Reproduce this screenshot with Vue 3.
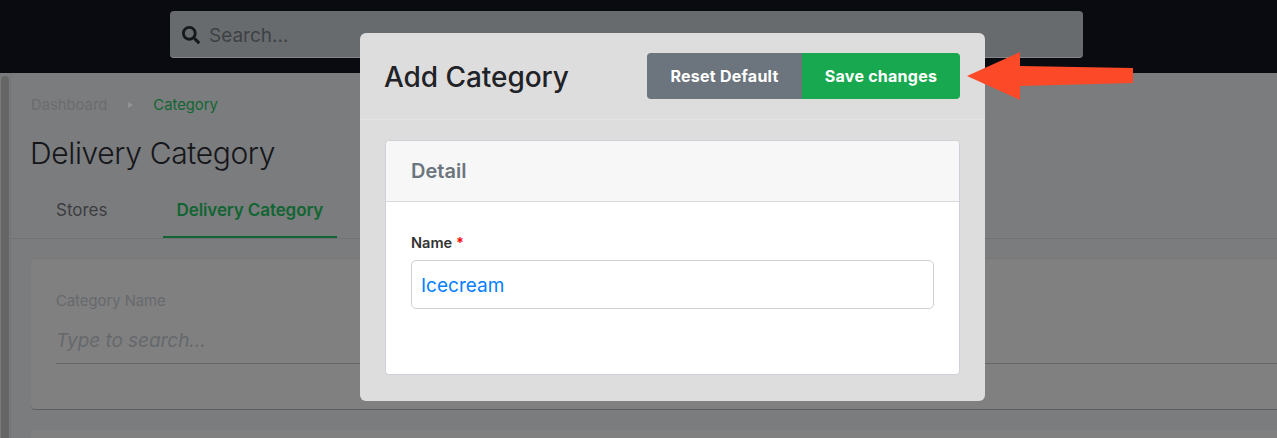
<script setup>
import { ref } from 'vue';

const tabs = [
  { label: 'Stores', active: false },
  { label: 'Delivery Category', active: true },
];
const categoryName = ref('Icecream');
</script>

<template>
  <div class="page">
    <header class="navbar">
      <div class="search">
        <svg class="search-icon" viewBox="0 0 512 512" aria-hidden="true">
          <path d="M505 442.700L405.300 343c-4.500-4.500-10.600-7-17-7H372c27.600-35.300 44-79.700 44-128C416 93.100 322.900 0 208 0S0 93.100 0 208s93.100 208 208 208c48.300 0 92.700-16.400 128-44v16.300c0 6.400 2.500 12.500 7 17l99.700 99.700c9.400 9.400 24.600 9.400 33.900 0l28.300-28.300c9.400-9.400 9.400-24.600.1-34zM208 336c-70.700 0-128-57.200-128-128 0-70.700 57.200-128 128-128 70.700 0 128 57.200 128 128 0 70.700-57.200 128-128 128z" />
        </svg>
        <span class="search-text">Search...</span>
      </div>
    </header>

    <div class="body">
      <div class="rail"><div class="rail-thumb"></div></div>
      <main class="content">
        <div class="top">
          <nav class="crumbs">
            <span class="crumb">Dashboard</span>
            <span class="crumb-sep"></span>
            <span class="crumb-current">Category</span>
          </nav>
          <h1 class="page-title">Delivery Category</h1>
          <div class="tabs">
            <div v-for="tab in tabs" :key="tab.label" class="tab" :class="{ active: tab.active }">{{ tab.label }}</div>
          </div>
        </div>
        <div class="cards">
          <section class="filter-card">
            <div class="filter-label">Category Name</div>
            <div class="filter-input">Type to search...</div>
          </section>
          <section class="next-card"></section>
        </div>
      </main>
    </div>

    <div class="modal">
      <div class="modal-head">
        <h2 class="modal-title">Add Category</h2>
        <div class="btn-group">
          <button class="btn btn-reset">Reset Default</button>
          <button class="btn btn-save">Save changes</button>
        </div>
      </div>
      <div class="modal-body">
        <div class="detail">
          <div class="detail-head">Detail</div>
          <div class="detail-body">
            <label class="field-label" for="name">Name <span class="req">*</span></label>
            <input id="name" v-model="categoryName" class="field-input" type="text" />
          </div>
        </div>
      </div>
    </div>

    <svg class="arrow" viewBox="0 0 170 52" aria-hidden="true">
      <path d="M1 25 L54 1 L54 15 L167 17 L167 32 L54 35 L54 49 Z" fill="#fc4a28" />
    </svg>
  </div>
</template>

<style>
html, body {
  margin: 0;
  height: 100%;
  overflow: hidden;
}
</style>

<style scoped>
.page {
  position: relative;
  height: 438px;
  overflow: hidden;
  background: #7b7c7e;
  font-family: Inter, "Liberation Sans", sans-serif;
}

.navbar {
  height: 73px;
  box-sizing: border-box;
  padding: 11px 194px 0 170px;
  background: #0a0b11;
}

.search {
  height: 47px;
  box-sizing: border-box;
  display: flex;
  align-items: center;
  gap: 9px;
  padding: 2px 12px 0 12px;
  background: #676b6e;
  border-bottom: 1px solid #85888a;
  border-radius: 4px;
}

.search-icon {
  width: 18px;
  height: 18px;
  fill: #16181b;
}

.search-text {
  font-size: 19px;
  color: #3e4144;
}

.body {
  display: flex;
  height: 365px;
}

.rail {
  width: 11px;
  flex: none;
  box-sizing: border-box;
  padding-top: 3px;
  background: #797a7c;
  border-right: 1px solid #737476;
}

.rail-thumb {
  width: 8px;
  height: 100%;
  margin-left: 1px;
  background: #666666;
  border-radius: 4px 4px 0 0;
}

.content {
  flex: 1;
  min-width: 0;
}

.top {
  height: 166px;
  box-sizing: border-box;
  display: flex;
  flex-direction: column;
  padding: 23px 0 0 20px;
  border-bottom: 1px solid #707173;
}

.crumbs {
  display: flex;
  align-items: center;
  height: 18px;
  font-size: 14.8px;
}

.crumb {
  color: #6b6c6e;
}

.crumb-sep {
  width: 0;
  height: 0;
  margin: 0 20px 0 21px;
  border-left: 5px solid #929395;
  border-top: 3px solid transparent;
  border-bottom: 3px solid transparent;
}

.crumb-current {
  color: #126532;
}

.page-title {
  margin: 21px 0 0 -1px;
  font-size: 30px;
  line-height: 36px;
  font-weight: 300;
  letter-spacing: -0.35px;
  color: #15161a;
}

.tabs {
  display: flex;
  margin-top: auto;
}

.tab {
  height: 38px;
  box-sizing: border-box;
  padding: 0 25px;
  margin-right: 30px;
  font-size: 17px;
  line-height: 20px;
  color: #3b3d40;
}

.tab.active {
  padding: 0 14px;
  margin-right: 0;
  font-weight: 600;
  letter-spacing: -0.1px;
  color: #126532;
  border-bottom: 2px solid #126532;
}

.cards {
  padding: 19px 0 0 20px;
}

.filter-card {
  height: 152px;
  box-sizing: border-box;
  padding: 33px 0 0 25px;
  background: #808080;
  border-top: 1px solid #757678;
  border-bottom: 1px solid #5e5e5e;
  border-radius: 4px 0 0 4px;
}

.filter-label {
  font-size: 14.8px;
  line-height: 18px;
  color: #66696d;
}

.filter-input {
  height: 44px;
  margin-top: 10px;
  box-sizing: border-box;
  padding-top: 9px;
  font-size: 19px;
  line-height: 24px;
  font-style: italic;
  letter-spacing: -0.05px;
  color: #65686c;
  border-bottom: 1px solid #646567;
}

.next-card {
  height: 40px;
  margin-top: 20px;
  background: #808080;
  border-radius: 4px 0 0 0;
}

.modal {
  position: absolute;
  left: 360px;
  top: 33px;
  width: 625px;
  height: 368px;
  background: #dddddd;
  border-radius: 6px;
}

.modal-head {
  height: 87px;
  box-sizing: border-box;
  display: flex;
  align-items: flex-start;
  justify-content: space-between;
  padding: 20px 25px 0;
  border-bottom: 1px solid #e4e4e4;
}

.modal-title {
  margin: 0 0 0 -1px;
  font-size: 28px;
  line-height: 48px;
  font-weight: 500;
  letter-spacing: -0.05px;
  color: #1f2226;
}

.btn-group {
  display: flex;
}

.btn {
  height: 46px;
  border: 0;
  font-family: inherit;
  font-size: 16px;
  font-weight: 700;
  letter-spacing: 0.25px;
  color: #ffffff;
}

.btn-reset {
  width: 155px;
  background: #6c757d;
  border-radius: 4px 0 0 4px;
}

.btn-save {
  width: 158px;
  background: #18a84f;
  border-radius: 0 4px 4px 0;
}

.modal-body {
  padding: 20px 25px 0 25px;
}

.detail {
  height: 235px;
  box-sizing: border-box;
  background: #ffffff;
  border: 1px solid #d0d0d8;
  border-radius: 4px;
}

.detail-head {
  height: 61px;
  box-sizing: border-box;
  padding: 0 25px;
  font-size: 20px;
  line-height: 61px;
  font-weight: 600;
  color: #6c757d;
  background: #f7f7f7;
  border-bottom: 1px solid #d8d8de;
  border-radius: 4px 4px 0 0;
}

.detail-body {
  padding: 32px 25px 0;
}

.field-label {
  display: block;
  font-size: 14.6px;
  line-height: 18px;
  font-weight: 600;
  color: #333333;
}

.req {
  color: #ff0000;
}

.field-input {
  display: block;
  width: 100%;
  height: 49px;
  box-sizing: border-box;
  margin-top: 8px;
  padding: 2px 9px 0;
  font-family: inherit;
  font-size: 19px;
  color: #0580ff;
  background: #ffffff;
  border: 1px solid #ced0d6;
  border-radius: 5px;
  outline: none;
}

.arrow {
  position: absolute;
  left: 966px;
  top: 51px;
  width: 170px;
  height: 52px;
}
</style>
